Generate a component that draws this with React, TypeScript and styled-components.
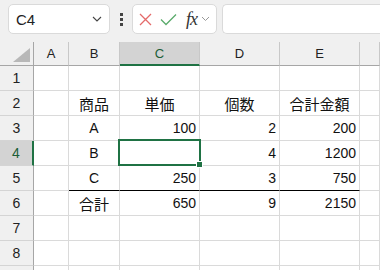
import React from "react";
import styled, { createGlobalStyle, css } from "styled-components";

const Global = createGlobalStyle`
  html, body { margin: 0; padding: 0; background: #f0f0f0; }
  body { width: 380px; height: 270px; overflow: hidden; font-family: "Liberation Sans", "Noto Sans CJK JP", sans-serif; }
`;

const Page = styled.div`
  width: 380px;
  height: 270px;
  overflow: hidden;
  background: #f0f0f0;
  display: flex;
  flex-direction: column;
`;

const Toolbar = styled.div`
  height: 30px;
  padding: 4px 0 0 8px;
  display: flex;
  align-items: stretch;
  flex: none;
`;

const Box = styled.div`
  box-sizing: border-box;
  background: #fff;
  border: 1px solid #dadada;
  border-radius: 5px;
  display: flex;
  align-items: center;
`;

const NameBox = styled(Box)`
  width: 102px;
  padding: 0 7px 0 7px;
  justify-content: space-between;
  font-size: 15px;
  color: #222;
`;

const Dots = styled.div`
  width: 22px;
  display: flex;
  flex-direction: column;
  align-items: center;
  justify-content: center;
  gap: 2px;
  & > span { width: 3px; height: 3px; background: #444; display: block; }
`;

const FxBox = styled(Box)`
  width: 85px;
  padding: 0 0 0 6px;
  gap: 8px;
`;

const Fx = styled.span`
  font-family: "Liberation Serif", "DejaVu Serif", serif;
  font-style: italic;
  font-size: 18px;
  color: #333;
  margin-left: 1px;
  letter-spacing: -1px;
`;

const Formula = styled(Box)`
  flex: 1;
  margin-left: 5px;
  border-right: none;
  border-top-right-radius: 0;
  border-bottom-right-radius: 0;
`;

const Sheet = styled.div`
  margin-top: 8px;
  display: grid;
  grid-template-columns: 34px 35px 51px 80px 80px 80px 1fr;
  grid-auto-rows: 25px;
  grid-template-rows: 24px;
  background: #fff;
  flex: 1;
`;

const ColHead = styled.div<{ $sel?: boolean }>`
  box-sizing: border-box;
  background: ${(p) => (p.$sel ? "#d3d3d3" : "#f0f0f0")};
  border-right: 1px solid #c8c8c8;
  border-bottom: ${(p) => (p.$sel ? "2px solid #1f7244" : "1px solid #a6a6a6")};
  display: flex;
  align-items: center;
  justify-content: center;
  font-size: 13px;
  color: ${(p) => (p.$sel ? "#1b5e38" : "#222")};
  padding-top: ${(p) => (p.$sel ? "1px" : "0")};
`;

const Corner = styled.div`
  box-sizing: border-box;
  background: #f0f0f0;
  border-right: 1px solid #a6a6a6;
  border-bottom: 1px solid #a6a6a6;
  display: flex;
  align-items: flex-end;
  justify-content: flex-end;
  padding: 0 3px 3px 0;
`;

const RowHead = styled.div<{ $sel?: boolean }>`
  box-sizing: border-box;
  background: ${(p) => (p.$sel ? "#d3d3d3" : "#f0f0f0")};
  border-right: ${(p) => (p.$sel ? "2px solid #1f7244" : "1px solid #a6a6a6")};
  border-bottom: 1px solid #d4d4d4;
  display: flex;
  align-items: center;
  justify-content: center;
  font-size: 14px;
  color: ${(p) => (p.$sel ? "#1b5e38" : "#222")};
`;

const Cell = styled.div<{ $align?: "left" | "center" | "right"; $rule?: boolean; $active?: boolean }>`
  box-sizing: border-box;
  position: relative;
  border-right: 1px solid #dadada;
  border-bottom: 1px solid ${(p) => (p.$rule ? "#000" : "#dadada")};
  display: flex;
  align-items: center;
  justify-content: ${(p) =>
    p.$align === "right" ? "flex-end" : p.$align === "center" ? "center" : "flex-start"};
  padding: 0 3px;
  font-size: 14px;
  color: #111;
  white-space: nowrap;
  ${(p) =>
    p.$active &&
    css`
      &::after {
        content: "";
        position: absolute;
        left: -2px;
        top: -2px;
        right: -2px;
        bottom: -1px;
        border: 2px solid #1f7244;
        pointer-events: none;
      }
    `}
`;

const Handle = styled.span`
  position: absolute;
  right: -4px;
  bottom: -3px;
  width: 5px;
  height: 5px;
  background: #1f7244;
  border: 1px solid #fff;
  z-index: 2;
`;

const Jp = styled.span`
  font-family: "Noto Sans CJK JP", sans-serif;
  font-size: 15px;
`;

type Align = "left" | "center" | "right";
const cols = ["A", "B", "C", "D", "E", ""];

const data: (string | null)[][] = [
  [null, null, null, null, null, null],
  [null, "商品", "単価", "個数", "合計金額", null],
  [null, "A", "100", "2", "200", null],
  [null, "B", "", "4", "1200", null],
  [null, "C", "250", "3", "750", null],
  [null, "合計", "650", "9", "2150", null],
  [null, null, null, null, null, null],
  [null, null, null, null, null, null],
  [null, null, null, null, null, null],
];

const isJp = (s: string) => /[^\x00-\x7f]/.test(s);
const alignOf = (v: string | null, c: number): Align => {
  if (!v) return "left";
  if (c === 1 || isJp(v)) return "center";
  return /^\d+$/.test(v) ? "right" : "left";
};

export default function App() {
  return (
    <Page>
      <Global />
      <Toolbar>
        <NameBox>
          <span>C4</span>
          <svg width="10" height="6" viewBox="0 0 10 6">
            <path d="M1 1 L5 5 L9 1" fill="none" stroke="#444" strokeWidth="1.1" />
          </svg>
        </NameBox>
        <Dots>
          <span />
          <span />
          <span />
        </Dots>
        <FxBox>
          <svg width="13" height="13" viewBox="0 0 13 13">
            <path d="M1 1 L12 12 M12 1 L1 12" stroke="#e46a6a" strokeWidth="1.3" fill="none" />
          </svg>
          <svg width="17" height="13" viewBox="0 0 17 13">
            <path d="M1 6.5 L6 11.5 L16 1.5" stroke="#5bab6c" strokeWidth="1.3" fill="none" />
          </svg>
          <Fx>fx</Fx>
          <svg width="9" height="6" viewBox="0 0 9 6" style={{ marginLeft: -4 }}>
            <path d="M1 1 L4.5 4.5 L8 1" fill="none" stroke="#999" strokeWidth="1" />
          </svg>
        </FxBox>
        <Formula />
      </Toolbar>
      <Sheet>
        <Corner>
          <svg width="17" height="14" viewBox="0 0 17 14">
            <path d="M17 0 L17 14 L0 14 Z" fill="#b8b8b8" />
          </svg>
        </Corner>
        {cols.map((c, i) => (
          <ColHead key={"h" + i} $sel={c === "C"}>
            {c}
          </ColHead>
        ))}
        {data.map((row, r) => (
          <React.Fragment key={"r" + r}>
            <RowHead $sel={r === 3}>{r < 8 ? r + 1 : ""}</RowHead>
            {row.map((v, c) => (
              <Cell
                key={c}
                $align={alignOf(v, c)}
                $rule={r === 4 && c >= 1 && c <= 4}
                $active={r === 3 && c === 2}
              >
                {v && (isJp(v) ? <Jp>{v}</Jp> : v)}
                {r === 3 && c === 2 && <Handle />}
              </Cell>
            ))}
          </React.Fragment>
        ))}
      </Sheet>
    </Page>
  );
}
